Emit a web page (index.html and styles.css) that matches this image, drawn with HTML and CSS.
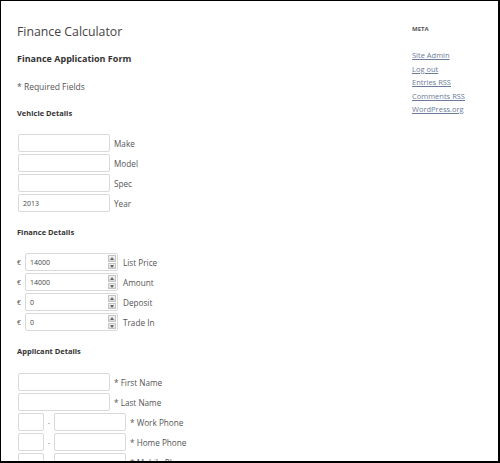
FILE: index.html
```html
<!DOCTYPE html>
<html>
<head>
<meta charset="utf-8">
<link rel="stylesheet" href="styles.css">
</head>
<body>
<div class="frame">
  <main class="content">
    <h1 class="site-title">Finance Calculator</h1>
    <h2 class="form-title">Finance Application Form</h2>
    <p class="required">* Required Fields</p>

    <h3 class="section">Vehicle Details</h3>
    <div class="rows">
      <div class="row"><input class="txt" type="text"><label>Make</label></div>
      <div class="row"><input class="txt" type="text"><label>Model</label></div>
      <div class="row"><input class="txt" type="text"><label>Spec</label></div>
      <div class="row"><input class="txt" type="text" value="2013"><label>Year</label></div>
    </div>

    <h3 class="section">Finance Details</h3>
    <div class="rows">
      <div class="row"><span class="cur">€</span><span class="num"><span class="numval">14000</span><span class="spin"><i class="up"></i><i class="dn"></i></span></span><label>List Price</label></div>
      <div class="row"><span class="cur">€</span><span class="num"><span class="numval">14000</span><span class="spin"><i class="up"></i><i class="dn"></i></span></span><label>Amount</label></div>
      <div class="row"><span class="cur">€</span><span class="num"><span class="numval">0</span><span class="spin"><i class="up"></i><i class="dn"></i></span></span><label>Deposit</label></div>
      <div class="row"><span class="cur">€</span><span class="num"><span class="numval">0</span><span class="spin"><i class="up"></i><i class="dn"></i></span></span><label>Trade In</label></div>
    </div>

    <h3 class="section">Applicant Details</h3>
    <div class="rows applicant">
      <div class="row"><input class="txt" type="text"><label>* First Name</label></div>
      <div class="row"><input class="txt" type="text"><label>* Last Name</label></div>
      <div class="row"><input class="txt short" type="text"><span class="dash">-</span><input class="txt mid" type="text"><label>* Work Phone</label></div>
      <div class="row"><input class="txt short" type="text"><span class="dash">-</span><input class="txt mid" type="text"><label>* Home Phone</label></div>
      <div class="row"><input class="txt short" type="text"><span class="dash">-</span><input class="txt mid" type="text"><label>* Mobile Phone</label></div>
    </div>
  </main>
  <aside class="sidebar">
    <h3 class="widget-title">META</h3>
    <ul class="links">
      <li><a href="#">Site Admin</a></li>
      <li><a href="#">Log out</a></li>
      <li><a href="#">Entries RSS</a></li>
      <li><a href="#">Comments RSS</a></li>
      <li><a href="#">WordPress.org</a></li>
    </ul>
  </aside>
</div>
</body>
</html>
```

FILE: styles.css
```css
html, body {
  margin: 0;
  padding: 0;
  background: #fff;
}
body {
  width: 500px;
  height: 463px;
  overflow: hidden;
  box-sizing: border-box;
  border-style: solid;
  border-color: #000;
  border-width: 1px 2px 2px 1px;
  font-family: "Open Sans", "DejaVu Sans", sans-serif;
  color: #444;
}
.frame {
  display: flex;
  padding: 0 0 0 16px;
}
.content {
  width: 395px;
}
.site-title {
  margin: 23px 0 0 0;
  font-size: 12.3px;
  font-weight: 400;
  line-height: 16px;
  color: #444;
}
.form-title {
  margin: 12px 0 0 0;
  font-size: 9px;
  font-weight: 700;
  line-height: 14px;
  color: #333;
}
.required {
  margin: 15px 0 0 0;
  font-size: 8.5px;
  line-height: 12px;
  color: #555;
}
.section {
  margin: 14px 0 0 0;
  font-size: 7.5px;
  font-weight: 700;
  line-height: 12px;
  color: #333;
}
.rows {
  margin: 15px 0 0 0;
  display: flex;
  flex-direction: column;
  gap: 2px;
}
.rows.applicant {
  margin-top: 16px;
}
.rows + .section {
  margin-top: 14px;
}
.row {
  display: flex;
  align-items: center;
  height: 18px;
  font-size: 8.2px;
  color: #555;
}
.row label {
  margin-left: 4px;
}
.txt {
  box-sizing: border-box;
  width: 92px;
  height: 18px;
  margin: 0 0 0 1px;
  padding: 0 4px;
  border: 1px solid #d9d9d9;
  border-radius: 2px;
  font-family: "Open Sans", sans-serif;
  font-size: 7px;
  color: #444;
  background: #fff;
  outline: none;
}
.txt.short {
  width: 26px;
}
.txt.mid {
  width: 72px;
  margin-left: 0;
}
.dash {
  width: 10px;
  text-align: center;
  font-size: 7px;
  color: #777;
}
.cur {
  width: 8px;
  font-size: 7px;
  color: #555;
}
.num {
  box-sizing: border-box;
  display: flex;
  align-items: center;
  justify-content: space-between;
  width: 93px;
  height: 18px;
  border: 1px solid #d9d9d9;
  border-radius: 2px;
  padding: 0 0 0 4px;
  font-size: 7px;
  color: #444;
}
.spin {
  display: flex;
  flex-direction: column;
  gap: 1px;
  width: 8px;
  height: 14px;
  margin-right: 1px;
}
.spin i {
  position: relative;
  flex: 1;
  background: linear-gradient(#f4f4f4, #d8d8d8);
  border: 1px solid #c4c4c4;
  box-sizing: border-box;
}
.spin i::after {
  content: "";
  position: absolute;
  left: 1px;
  top: 1px;
  border-left: 2px solid transparent;
  border-right: 2px solid transparent;
}
.spin .up::after {
  border-bottom: 3px solid #666;
}
.spin .dn::after {
  border-top: 3px solid #666;
}
.row .num + label {
  margin-left: 5px;
}
.sidebar {
  padding-top: 23px;
  width: 80px;
}
.widget-title {
  margin: 0;
  font-size: 6px;
  font-weight: 700;
  line-height: 10px;
  color: #555;
}
.links {
  list-style: none;
  margin: 15px 0 0 0;
  padding: 0;
}
.links li {
  line-height: 13.5px;
  font-size: 7.5px;
}
.links a {
  color: #6b7b99;
  text-decoration: underline;
}
```
